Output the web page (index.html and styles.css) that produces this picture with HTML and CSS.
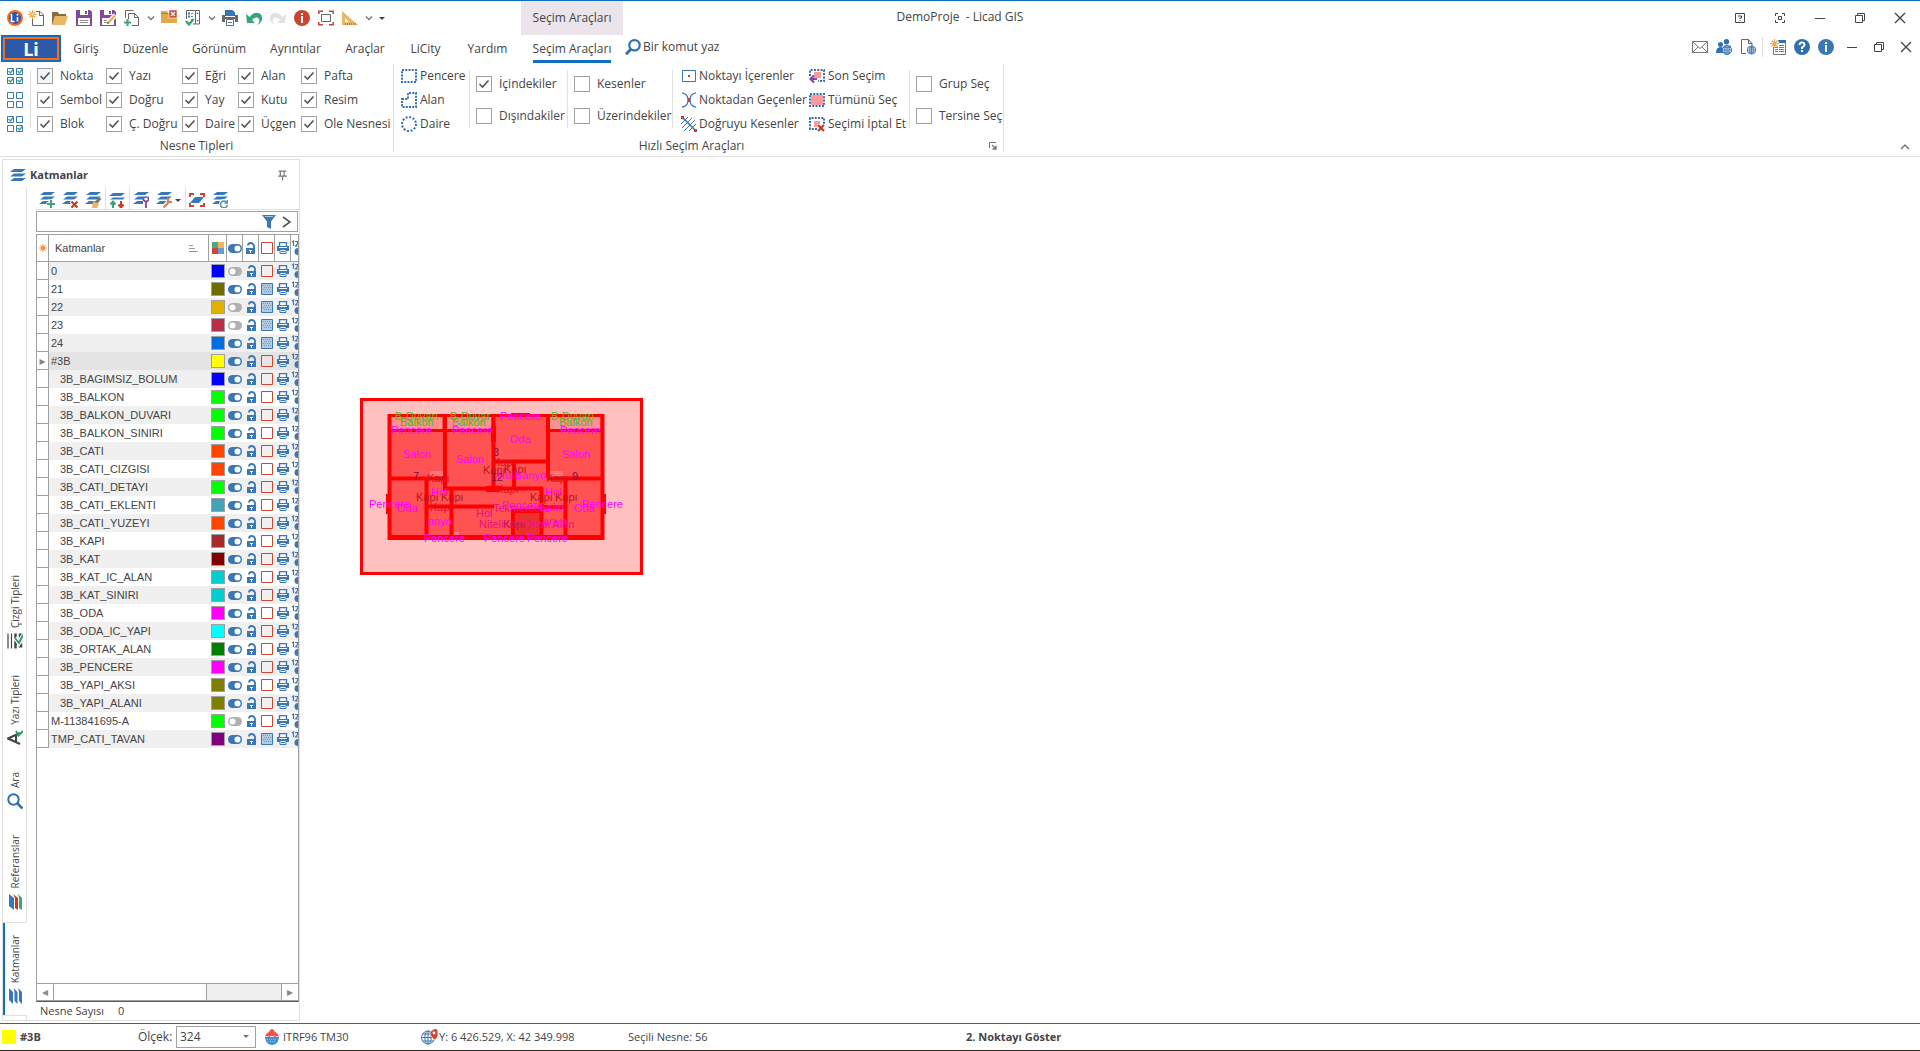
FILE: index.html
```html
<!DOCTYPE html>
<html lang="tr">
<head>
<meta charset="utf-8">
<title>DemoProje - Licad GIS</title>
<link rel="stylesheet" href="styles.css">
</head>
<body>
<svg class="sprite" aria-hidden="true">
  <symbol id="i-logo" viewBox="0 0 16 16"><circle cx="8" cy="8" r="7" fill="#2d5aa8" stroke="#ff6a13" stroke-width="2"/><path d="M4.500 4v7.500h3M10.500 7v4.500" fill="none" stroke="#fff" stroke-width="1.600"/><circle cx="10.500" cy="4.800" r="1" fill="#fff"/></symbol>
  <symbol id="i-new" viewBox="0 0 16 16"><path d="M8 1.500h4l3.500 3.500v10.500h-11V9" fill="#fff" stroke="#666"/><path d="M11.500 1.500V5.500h4" fill="none" stroke="#666"/><path d="M4.500 0v9M0 4.500h9M1.500 1.500l6 6M7.500 1.500l-6 6" stroke="#f0a94a" stroke-width="1.200"/><circle cx="4.500" cy="4.500" r="1" fill="#fff"/></symbol>
  <symbol id="i-folder" viewBox="0 0 16 16"><path d="M0 2h6l1 2h7v2H3L1 14H0z" fill="#8a6a3a"/><path d="M3 6h13l-3 9H0z" fill="#e8b768"/></symbol>
  <symbol id="i-save" viewBox="0 0 16 16"><path d="M0 0h14l2 2v14H0z" fill="#8347a0"/><path d="M4 0h8v5H4zM2 8h12v7H2z" fill="#fff"/><path d="M9 1h2v3H9z" fill="#8347a0"/><path d="M4 10.500h8M4 12.500h8" stroke="#8a8a8a"/></symbol>
  <symbol id="i-saveedit" viewBox="0 0 16 16"><path d="M0 0h14l2 2v14H0z" fill="#8347a0"/><path d="M4 0h8v5H4zM2 8h12v7H2z" fill="#fff"/><path d="M9 1h2v3H9z" fill="#8347a0"/><path d="M4 10.500h4M4 12.500h3" stroke="#8a8a8a"/><path d="M15.500 5L8 13" stroke="#fff" stroke-width="5"/><path d="M15 5.500L8.500 12.500" stroke="#e8b050" stroke-width="2.500"/><path d="M7 14l.6-2.500 2 1.800z" fill="#555"/></symbol>
  <symbol id="i-addpage" viewBox="0 0 16 16"><path d="M1.500 8V.5h8M4.500 9V3.500h6l4 4v8H8" fill="none" stroke="#666"/><path d="M10.500 3.500v4h4" fill="none" stroke="#666"/><path d="M3.500 9v7M0 12.500h7" stroke="#3aa57a" stroke-width="2"/></symbol>
  <symbol id="i-boxx" viewBox="0 0 16 16"><path d="M0 1h6l1 2h9v10H0z" fill="#e0aa4c"/><path d="M0 3.500h8" stroke="#a87f3a"/><path d="M8 0h8v8H8z" fill="#cc4631" stroke="#fff" stroke-width=".6"/><path d="M10 2l4 4M14 2l-4 4" stroke="#fff" stroke-width="1.300"/></symbol>
  <symbol id="i-list" viewBox="0 0 16 16"><path d="M1.500 9V.5h9V14H8M10.500 .5h4V14h-4" fill="none" stroke="#666"/><path d="M3 3.500h2M3 6.500h2" stroke="#3a77b7" stroke-width="2"/><path d="M6 3.500h3M6 6.500h3M6 9.500h3" stroke="#777" stroke-dasharray="2 1"/><path d="M11.500 4l1-1.500 1 1.500zM11.500 10l1 1.500 1-1.500z" fill="#444"/><path d="M1 11l3 3.500L8.500 9" fill="none" stroke="#3aa57a" stroke-width="2.400"/></symbol>
  <symbol id="i-print" viewBox="0 0 16 16"><path d="M3.500 6V.5h7l2 2V6" fill="#3a77b7" stroke="#2f6aa8"/><path d="M0 5h3v2h10V5h3v7h-3V9H3v3H0z" fill="#686868"/><path d="M4.500 9.500h7v6h-7z" fill="#fff" stroke="#686868"/><path d="M6 12.500h4" stroke="#3a77b7"/></symbol>
  <symbol id="i-undo" viewBox="0 0 16 16"><path d="M0 4l1 9h8L6 10q4-4 6.500-1.500T11 15q6-3 5-8T8.500 3Q6 4 3.500 7z" fill="#3aa57a"/></symbol>
  <symbol id="i-redo" viewBox="0 0 16 16"><path d="M16 4l-1 9H7l3-3Q6 6 3.500 8.500T5 15Q-1 12 0 7t7.500-4Q10 4 12.500 7z" fill="#e2e2e2"/></symbol>
  <symbol id="i-infored" viewBox="0 0 16 16"><circle cx="8" cy="8" r="8" fill="#c9452f"/><path d="M7 3h2v2H7zM7 6h2v7H7z" fill="#fff"/></symbol>
  <symbol id="i-frame" viewBox="0 0 16 16"><path d="M.8 4V1.300H5M11 1.300h4.200V4M15.200 12v2.700H11M5 14.700H.8V12" fill="none" stroke="#c9452f" stroke-width="1.500"/><path d="M3.500 4.500h9v7h-9z" fill="none" stroke="#666"/></symbol>
  <symbol id="i-ruler" viewBox="0 0 16 16"><path d="M0 1l16 14H0z" fill="#e8b768"/><path d="M3 8l4 4H3z" fill="#fff"/><path d="M3 14h11" stroke="#555" stroke-dasharray="1 1"/></symbol>
  <symbol id="i-caret" viewBox="0 0 8 8"><path d="M1 2.500l3 3 3-3" fill="none" stroke="#777" stroke-width="1.400"/></symbol>
  <symbol id="i-caretfull" viewBox="0 0 8 8"><path d="M1 3h6L4 6z" fill="#444"/></symbol>
  <symbol id="i-mag" viewBox="0 0 16 16"><circle cx="9.500" cy="6.300" r="5.200" fill="none" stroke="#2f6fb3" stroke-width="2.200"/><path d="M6 10l-5 5.300" stroke="#2f6fb3" stroke-width="3"/></symbol>

  <symbol id="i-help" viewBox="0 0 12 12"><path d="M1.500 1.500h9v9h-9z" fill="none" stroke="#444"/><path d="M4 4h3.500v2H6v1M6 8v1" fill="none" stroke="#444"/></symbol>
  <symbol id="i-full" viewBox="0 0 12 12"><path d="M1.500 4V1.500H4M8 1.500h2.500V4M10.500 8v2.500H8M4 10.500H1.500V8M4.500 4.500h3v3h-3z" fill="none" stroke="#444"/></symbol>
  <symbol id="i-min" viewBox="0 0 12 12"><path d="M1 6.500h10" stroke="#444"/></symbol>
  <symbol id="i-restore" viewBox="0 0 12 12"><path d="M1.500 3.500h7v7h-7zM3.500 3V1.500h7v7H9" fill="none" stroke="#444"/></symbol>
  <symbol id="i-close" viewBox="0 0 12 12"><path d="M1 1l10 10M11 1L1 11" stroke="#444" stroke-width="1.400"/></symbol>
  <symbol id="i-mail" viewBox="0 0 16 16"><path d="M.5 2.500h15v11H.5zM.5 2.500L8 9.500l7.500-7M.5 13.500L6 8M15.500 13.500L10 8" fill="none" stroke="#777"/></symbol>
  <symbol id="i-people" viewBox="0 0 16 16"><circle cx="4.500" cy="5.500" r="2.500" fill="#2f6fb3"/><circle cx="10.500" cy="2.700" r="2.700" fill="#2f6fb3"/><path d="M0 14q0-6 4.500-6T9 14zM7 8q2-3 8-1v3H8z" fill="#2f6fb3"/><use href="#i-globe" x="6" y="6" width="10" height="10"/></symbol>
  <symbol id="i-globe" viewBox="0 0 10 10"><circle cx="5" cy="5" r="4.500" fill="#fff" stroke="#2f6fb3"/><path d="M5 .5v9M.5 5h9M1.500 2.700h7M1.500 7.300h7" stroke="#2f6fb3" stroke-width=".9"/><ellipse cx="5" cy="5" rx="2.200" ry="4.500" fill="none" stroke="#2f6fb3" stroke-width=".9"/></symbol>
  <symbol id="i-pageglobe" viewBox="0 0 16 16"><path d="M6 14.500H1.500V.5h7l3.500 4V7M8.500 .5v4H12" fill="none" stroke="#666"/><use href="#i-globe" x="7" y="6.500" width="9" height="9"/></symbol>
  <symbol id="i-newlist" viewBox="0 0 16 16"><path d="M3.500 8v7.500h12V4M9 3h7" fill="none" stroke="#777"/><path d="M8 1h8v3H9z" fill="#2f6fb3"/><path d="M5 8.500h3M9 6.500h5M9 8.500h5M5 10.500h3M9 10.500h5M5 12.500h3M9 12.500h5" stroke="#777"/><path d="M4.500 0v9M0 4.500h9M1.500 1.500l6 6M7.500 1.500l-6 6" stroke="#f0a94a" stroke-width="1.200"/></symbol>
  <symbol id="i-q" viewBox="0 0 16 16"><circle cx="8" cy="8" r="8" fill="#2f6fb3"/><path d="M5.500 6q0-2.600 2.500-2.600T10.500 6Q10.500 7.300 8 8.300V10M8 11v2" fill="none" stroke="#fff" stroke-width="1.900"/></symbol>
  <symbol id="i-info" viewBox="0 0 16 16"><circle cx="8" cy="8" r="8" fill="#3a77b7"/><path d="M7 3h2v2H7zM7 6h2v7H7z" fill="#fff"/></symbol>

  <symbol id="i-allon" viewBox="0 0 16 16"><path d="M.5 .5h6v6h-6zM9.500 .5h6v6h-6zM.5 9.500h6v6h-6zM9.500 9.500h6v6h-6z" fill="#fff" stroke="#3a77b7"/><path d="M1.500 3l2 2 3-4M10.500 3l2 2 3-4M1.500 12l2 2 3-4M10.500 12l2 2 3-4" fill="none" stroke="#3aa57a" stroke-width="1.400"/></symbol>
  <symbol id="i-alloff" viewBox="0 0 16 16"><path d="M.5 .5h6v6h-6zM9.500 .5h6v6h-6zM.5 9.500h6v6h-6zM9.500 9.500h6v6h-6z" fill="#fff" stroke="#3a77b7"/></symbol>
  <symbol id="i-invert" viewBox="0 0 16 16"><path d="M.5 .5h6v6h-6zM9.500 .5h6v6h-6zM.5 9.500h6v6h-6zM9.500 9.500h6v6h-6z" fill="#fff" stroke="#3a77b7"/><path d="M1.500 3l2 2 3-4M10.500 12l2 2 3-4" fill="none" stroke="#3aa57a" stroke-width="1.400"/></symbol>
  <symbol id="i-window" viewBox="0 0 16 16"><path d="M1 2h14v12H1z" fill="none" stroke="#2f6fb3" stroke-width="2" stroke-dasharray="2 1.250"/></symbol>
  <symbol id="i-area" viewBox="0 0 16 16"><path d="M1 7h6V1h8v14H1z" fill="none" stroke="#2f6fb3" stroke-width="2" stroke-dasharray="2 1.250"/></symbol>
  <symbol id="i-circle" viewBox="0 0 16 16"><circle cx="8" cy="8" r="7" fill="none" stroke="#2f6fb3" stroke-width="2" stroke-dasharray="2 1.660"/></symbol>
  <symbol id="i-ptin" viewBox="0 0 16 16"><path d="M1.500 2.500h13v11h-13z" fill="none" stroke="#3a77b7"/><path d="M7 7h2v2H7z" fill="#d23c28"/></symbol>
  <symbol id="i-ptpass" viewBox="0 0 16 16"><path d="M1 .8q6 1 6 7.200t-6 7.200M15 .8q-6 1-6 7.200t6 7.200" fill="none" stroke="#3a77b7" stroke-width="1.300"/><path d="M7 6h2v4H7z" fill="#d23c28"/></symbol>
  <symbol id="i-cross" viewBox="0 0 16 16"><path d="M1 1l14 14" stroke="#3a77b7" stroke-width="1.600"/><path d="M0 8l7-7M1 12L11 2M3 15L14 4M8 15l7-7" stroke="#3a77b7"/><path d="M0 0h3v3H0zM13 13h3v3h-3z" fill="#d23c28"/></symbol>
  <symbol id="i-last" viewBox="0 0 16 16"><path d="M5 4h7v6H5z" fill="#ff9a9a"/><path d="M1 8V2h14v11H9" fill="none" stroke="#2f6fb3" stroke-width="2" stroke-dasharray="2 1.300"/><path d="M8 11H2M5 7.500L1.500 11 5 14.500" fill="none" stroke="#8347a0" stroke-width="2.200"/></symbol>
  <symbol id="i-all" viewBox="0 0 16 16"><path d="M2 3h12v10H2z" fill="#ff9a9a"/><path d="M1 2h14v12H1z" fill="none" stroke="#2f6fb3" stroke-width="2" stroke-dasharray="2 1.250"/></symbol>
  <symbol id="i-cancel" viewBox="0 0 16 16"><path d="M5 5h6v3H8v3H5z" fill="#ff9a9a"/><path d="M8 13H1V2h14v6" fill="none" stroke="#2f6fb3" stroke-width="2" stroke-dasharray="2 1.250"/><path d="M9 9l6 6M15 9l-6 6" stroke="#c93a24" stroke-width="2.200"/></symbol>
  <symbol id="i-launch" viewBox="0 0 8 8"><path d="M.5 6V.5H7" fill="none" stroke="#777"/><path d="M3 3l4 4M7 3.500V7H3.500" fill="none" stroke="#777" stroke-width="1.300"/></symbol>
  <symbol id="i-up" viewBox="0 0 10 10"><path d="M1 7l4-4 4 4" fill="none" stroke="#777" stroke-width="1.500"/></symbol>

  <symbol id="i-layers" viewBox="0 0 16 16"><path d="M4 2h12l-4 3H0zM4 6.500h12l-4 3H0zM4 11h12l-4 3H0z" fill="#3a77b7"/></symbol>
  <symbol id="i-lay" viewBox="0 0 16 16"><path d="M5 0h11l-4 3H1zM5 4.500h11l-4 3H1zM4 9h10l-4 3H0z" fill="#3a77b7"/></symbol>
  <symbol id="l-add" viewBox="0 0 16 16"><use href="#i-lay" width="16" height="16"/><path d="M11.500 7.500v9M7.500 12h9" stroke="#fff" stroke-width="4"/><path d="M12 8v8M8 12h8" stroke="#3aa57a" stroke-width="2"/></symbol>
  <symbol id="l-del" viewBox="0 0 16 16"><use href="#i-lay" width="16" height="16"/><path d="M9 9l6 6M15 9l-6 6" stroke="#fff" stroke-width="4"/><path d="M9.500 9.500l6 6M15.500 9.500l-6 6" stroke="#c93a24" stroke-width="2.200"/></symbol>
  <symbol id="l-brush" viewBox="0 0 16 16"><use href="#i-lay" width="16" height="16"/><path d="M15 6l-4 5" stroke="#777" stroke-width="3"/><path d="M8 9l6 3-2 4H7z" fill="#e8b768"/></symbol>
  <symbol id="l-move" viewBox="0 0 16 16"><path d="M4 1h12l-4 3H0zM4 5.500h12l-2 2H1z" fill="#3a77b7"/><path d="M4 16v-5M1.500 12.500L4 9.500l2.500 3" fill="none" stroke="#3aa57a" stroke-width="2"/><path d="M12 9v5M9.500 12.500l2.500 3 2.500-3" fill="none" stroke="#c93a24" stroke-width="2"/></symbol>
  <symbol id="l-tool" viewBox="0 0 16 16"><use href="#i-lay" width="16" height="16"/><path d="M13 6v10" stroke="#fff" stroke-width="6"/><path d="M10.500 5v3l2.500 2 2.500-2V5M13 9v7" fill="none" stroke="#8347a0" stroke-width="1.800"/></symbol>
  <symbol id="l-fix" viewBox="0 0 16 16"><use href="#i-lay" width="16" height="16"/><path d="M7 16l6-6" stroke="#fff" stroke-width="5"/><path d="M7.500 15.500l5-5M12 6v4h4" fill="none" stroke="#e07a50" stroke-width="2.200"/></symbol>
  <symbol id="l-frame" viewBox="0 0 16 16"><path d="M1 5V2h4M11 2h4v3M15 11v3h-4M5 14H1v-3" fill="none" stroke="#cc4631" stroke-width="2"/><path d="M6 5h9l-5 6H1z" fill="#3a77b7"/></symbol>
  <symbol id="l-ref" viewBox="0 0 16 16"><use href="#i-lay" width="16" height="16"/><circle cx="12" cy="12" r="5" fill="#fff"/><path d="M15 10.500a3.500 3.500 0 1 0 .5 2.500M15.500 8v3h-3" fill="none" stroke="#4d95b8" stroke-width="1.500"/></symbol>
  <symbol id="i-pin" viewBox="0 0 10 10"><path d="M1.500 1h7M3 1v4M6.500 1v4M1 5.500h8M5 6v3.500" fill="none" stroke="#777" stroke-width="1.100"/></symbol>
  <symbol id="i-filter" viewBox="0 0 16 16"><path d="M1 1h14L10 7.500V15l-4-2V7.500z" fill="#3a77b7"/><path d="M4 2.500h8" stroke="#a8c6e2"/></symbol>
  <symbol id="i-next" viewBox="0 0 10 12"><path d="M1 1l7 5-7 5" fill="none" stroke="#555" stroke-width="1.600"/></symbol>
  <symbol id="i-sun" viewBox="0 0 10 10"><circle cx="5" cy="5" r="2.500" fill="#f79646"/><path d="M5 1v8M1 5h8M2.200 2.200l5.600 5.600M7.800 2.200L2.200 7.800" stroke="#f79646" stroke-width=".9"/></symbol>
  <symbol id="i-sort" viewBox="0 0 9 8"><path d="M0 1.500h4M0 4.500h6M0 7.500h9" stroke="#999"/></symbol>
  <symbol id="i-palette" viewBox="0 0 12 12"><path d="M0 0h6v6H0z" fill="#4fa583"/><path d="M6 0h6v6H6z" fill="#ecb65f"/><path d="M0 6h6v6H0z" fill="#cc4631"/><path d="M6 6h6v6H6z" fill="#6a9bd8"/></symbol>
  <symbol id="i-on" viewBox="0 0 14 9"><rect width="14" height="9" rx="4.500" fill="#3a77b7"/><circle cx="9.500" cy="4.500" r="3" fill="#fff"/></symbol>
  <symbol id="i-off" viewBox="0 0 14 9"><rect width="14" height="9" rx="4.500" fill="#b0b0b0"/><circle cx="4.500" cy="4.500" r="3" fill="#fff"/></symbol>
  <symbol id="i-lock" viewBox="0 0 9 12"><path d="M2 3.500Q2 1 4.500 1T8 3.500V6" fill="none" stroke="#3a77b7" stroke-width="1.800"/><path d="M0 6h9v6H0z" fill="#3a77b7"/><path d="M4 8h1v3H4zM3 8h3v1H3z" fill="#fff"/></symbol>
  <symbol id="i-box" viewBox="0 0 12 12"><path d="M.5 .5h11v11H.5z" fill="none" stroke="#cc4631"/></symbol>
  <symbol id="i-hatch" viewBox="0 0 12 12"><path d="M.5 .5h11v11H.5z" fill="#b4cbe4" stroke="#3a77b7"/><path d="M2 2.500h8M3 4.500h8M2 6.500h8M3 8.500h8" stroke="#6f9aca" stroke-dasharray="1 1"/></symbol>
  <symbol id="i-prt" viewBox="0 0 12 12"><path d="M2.500 4V.5h7V4" fill="#fff" stroke="#3a77b7" stroke-width="1.400"/><path d="M0 4h12v5H0z" fill="#3a77b7"/><path d="M2 5.500h8" stroke="#fff"/><path d="M3 7.500h6v4H3z" fill="#fff" stroke="#3a77b7"/><path d="M4 9.500h4" stroke="#3a77b7"/></symbol>
  <symbol id="i-num" viewBox="0 0 7 16"><path d="M1 2l1.500-1v5M4 1.500h2.500v2L4.500 6H7" fill="none" stroke="#3a77b7" stroke-width="1.200"/><circle cx="7" cy="11.500" r="3.500" fill="#3a77b7"/></symbol>
  <symbol id="s-line" viewBox="0 0 16 16"><path d="M1 .5v15M4.500 .5v15" stroke="#444" stroke-width="1.200"/><path d="M8.500 .5v15" stroke="#444" stroke-width="2.500"/><path d="M13.500 .5v15" stroke="#444" stroke-width="3.500" stroke-dasharray="4 1"/><path d="M8 5l4 5 4-8" fill="none" stroke="#fff" stroke-width="4"/><path d="M8 5l4 5 4-8" fill="none" stroke="#2e9e6b" stroke-width="2"/></symbol>
  <symbol id="s-text" viewBox="0 0 16 16"><path d="M13 3L1 8.500 13 14M9 5v7" fill="none" stroke="#444" stroke-width="2"/><path d="M9 1l2.500 4.500L16 1" fill="none" stroke="#2e9e6b" stroke-width="2"/></symbol>
  <symbol id="s-mag" viewBox="0 0 16 16"><circle cx="6.500" cy="6.500" r="5.200" fill="none" stroke="#2f6fb3" stroke-width="2"/><path d="M10 10l5.500 5.500" stroke="#2f6fb3" stroke-width="2.600"/></symbol>
  <symbol id="s-ref" viewBox="0 0 16 16"><path d="M2 0l5 4v12l-5-4z" fill="#3a77b7"/><path d="M6 0l5 4v12l-3-2V4z" fill="#cc3a24"/><path d="M11 0l4 4v12l-3-2V4z" fill="#3aa57a"/></symbol>
  <symbol id="s-lay" viewBox="0 0 16 16"><path d="M2 0l4 4v12l-4-4zM6.500 0l4 4v12l-3-3V4zM11 0l4 4v12l-3-3V4z" fill="#3a77b7"/></symbol>
  <symbol id="i-crs" viewBox="0 0 14 16"><path d="M0 8h14q-1 8-7 8T0 8z" fill="#3c93cf"/><path d="M0 8q1-4 4-5 1-3 3-3t3 3q3 1 4 5l-2-1-2 1-2-1H6L4 8 2 7z" fill="#f0524f"/><path d="M2 10.500h10M3 12.500h8" stroke="#86c2e8" stroke-dasharray="1 1"/></symbol>
  <symbol id="i-geo" viewBox="0 0 17 16"><circle cx="7" cy="8.500" r="6.500" fill="#fff" stroke="#3a77b7"/><path d="M7 2v13M.5 8.500h13M1.500 5h11M1.500 12h11" stroke="#3a77b7"/><ellipse cx="7" cy="8.500" rx="3.200" ry="6.500" fill="none" stroke="#3a77b7"/><path d="M13 11Q9 6 9 4t4-4 4 4-4 7z" fill="#cc4631" stroke="#fff" stroke-width=".6"/><circle cx="13" cy="4" r="1.400" fill="#fff"/></symbol>
</svg>

<header class="titlebar">
  <div class="title-left">
    <div class="qat">
      <button class="ib qat-logo" aria-label="Licad"><svg><use href="#i-logo"/></svg></button>
      <button class="ib" aria-label="Yeni"><svg><use href="#i-new"/></svg></button>
      <button class="ib" aria-label="Aç"><svg><use href="#i-folder"/></svg></button>
      <button class="ib" aria-label="Kaydet"><svg><use href="#i-save"/></svg></button>
      <button class="ib" aria-label="Farklı Kaydet"><svg><use href="#i-saveedit"/></svg></button>
      <button class="ib" aria-label="Ekle"><svg><use href="#i-addpage"/></svg></button>
      <button class="ib drop" aria-label="Ekle seçenekleri"><svg><use href="#i-caret"/></svg></button>
      <button class="ib" aria-label="Kapat"><svg><use href="#i-boxx"/></svg></button>
      <button class="ib" aria-label="Liste"><svg><use href="#i-list"/></svg></button>
      <button class="ib drop" aria-label="Liste seçenekleri"><svg><use href="#i-caret"/></svg></button>
      <button class="ib" aria-label="Yazdır"><svg><use href="#i-print"/></svg></button>
      <button class="ib" aria-label="Geri al"><svg><use href="#i-undo"/></svg></button>
      <button class="ib" aria-label="Yinele"><svg><use href="#i-redo"/></svg></button>
      <button class="ib" aria-label="Bilgi"><svg><use href="#i-infored"/></svg></button>
      <button class="ib" aria-label="Tümünü göster"><svg><use href="#i-frame"/></svg></button>
      <button class="ib" aria-label="Ölç"><svg><use href="#i-ruler"/></svg></button>
      <button class="ib drop" aria-label="Ölç seçenekleri"><svg><use href="#i-caret"/></svg></button>
      <button class="ib drop" aria-label="Araç çubuğunu özelleştir"><svg><use href="#i-caretfull"/></svg></button>
    </div>
    <div class="context">Seçim Araçları</div>
  </div>
  <h1 class="title">DemoProje&nbsp; - Licad GIS</h1>
  <div class="winbtns">
    <button aria-label="Yardım"><svg><use href="#i-help"/></svg></button>
    <button aria-label="Tam ekran"><svg><use href="#i-full"/></svg></button>
    <button aria-label="Simge durumuna küçült"><svg><use href="#i-min"/></svg></button>
    <button aria-label="Önceki boyut"><svg><use href="#i-restore"/></svg></button>
    <button aria-label="Kapat"><svg><use href="#i-close"/></svg></button>
  </div>
</header>

<nav class="tabs">
  <button class="app">Li</button>
  <div class="tablist">
    <button>Giriş</button><button>Düzenle</button><button>Görünüm</button><button>Ayrıntılar</button><button>Araçlar</button><button>LiCity</button><button>Yardım</button><button class="on"><span>Seçim Araçları</span></button>
  </div>
  <label class="command"><svg><use href="#i-mag"/></svg><input type="text" placeholder="Bir komut yaz" aria-label="Bir komut yaz"></label>
  <div class="tabicons">
    <button class="ib" aria-label="Posta"><svg><use href="#i-mail"/></svg></button>
    <button class="ib" aria-label="Topluluk"><svg><use href="#i-people"/></svg></button>
    <button class="ib" aria-label="Web belgesi"><svg><use href="#i-pageglobe"/></svg></button>
    <i class="bar"></i>
    <button class="ib" aria-label="Yenilikler"><svg><use href="#i-newlist"/></svg></button>
    <button class="ib" aria-label="Yardım"><svg><use href="#i-q"/></svg></button>
    <button class="ib" aria-label="Hakkında"><svg><use href="#i-info"/></svg></button>
  </div>
  <div class="docbtns">
    <button aria-label="Belgeyi küçült"><svg><use href="#i-min"/></svg></button>
    <button aria-label="Belge boyutu"><svg><use href="#i-restore"/></svg></button>
    <button aria-label="Belgeyi kapat"><svg><use href="#i-close"/></svg></button>
  </div>
</nav>

<section class="ribbon">
  <div class="group">
    <div class="group-body">
      <div class="stack picks">
        <button class="ib" aria-label="Tümünü işaretle"><svg><use href="#i-allon"/></svg></button>
        <button class="ib" aria-label="Tümünü kaldır"><svg><use href="#i-alloff"/></svg></button>
        <button class="ib" aria-label="Tersine çevir"><svg><use href="#i-invert"/></svg></button>
      </div>
      <div class="types">
        <label class="hot"><input type="checkbox" checked>Nokta</label>
        <label><input type="checkbox" checked>Sembol</label>
        <label><input type="checkbox" checked>Blok</label>
        <label><input type="checkbox" checked>Yazı</label>
        <label><input type="checkbox" checked>Doğru</label>
        <label><input type="checkbox" checked>Ç. Doğru</label>
        <label><input type="checkbox" checked>Eğri</label>
        <label><input type="checkbox" checked>Yay</label>
        <label><input type="checkbox" checked>Daire</label>
        <label><input type="checkbox" checked>Alan</label>
        <label><input type="checkbox" checked>Kutu</label>
        <label><input type="checkbox" checked>Üçgen</label>
        <label><input type="checkbox" checked>Pafta</label>
        <label><input type="checkbox" checked>Resim</label>
        <label><input type="checkbox" checked>Ole Nesnesi</label>
      </div>
    </div>
    <div class="caption">Nesne Tipleri</div>
  </div>
  <div class="group">
    <div class="group-body">
      <div class="stack shapes">
        <button><svg><use href="#i-window"/></svg>Pencere</button>
        <button><svg><use href="#i-area"/></svg>Alan</button>
        <button><svg><use href="#i-circle"/></svg>Daire</button>
      </div>
      <div class="pair inside">
        <label><input type="checkbox" checked>İçindekiler</label>
        <label><input type="checkbox">Dışındakiler</label>
      </div>
      <div class="pair cutting">
        <label><input type="checkbox">Kesenler</label>
        <label><input type="checkbox">Üzerindekiler</label>
      </div>
      <div class="stack points">
        <button><svg><use href="#i-ptin"/></svg>Noktayı İçerenler</button>
        <button><svg><use href="#i-ptpass"/></svg>Noktadan Geçenler</button>
        <button><svg><use href="#i-cross"/></svg>Doğruyu Kesenler</button>
      </div>
      <div class="stack sels">
        <button><svg><use href="#i-last"/></svg>Son Seçim</button>
        <button><svg><use href="#i-all"/></svg>Tümünü Seç</button>
        <button><svg><use href="#i-cancel"/></svg>Seçimi İptal Et</button>
      </div>
      <div class="pair last">
        <label><input type="checkbox">Grup Seç</label>
        <label><input type="checkbox">Tersine Seç</label>
      </div>
    </div>
    <div class="caption with-launch"><span>Hızlı Seçim Araçları</span><button aria-label="Ayrıntılar"><svg><use href="#i-launch"/></svg></button></div>
  </div>
  <button class="collapse" aria-label="Şeridi daralt"><svg><use href="#i-up"/></svg></button>
</section>

<main class="work">
  <aside class="dock">
    <div class="dock-head">
      <svg><use href="#i-layers"/></svg><h2>Katmanlar</h2>
      <button aria-label="Otomatik gizle"><svg><use href="#i-pin"/></svg></button>
    </div>
    <div class="dock-body">
      <div class="sidetabs">
        <button><span>Çizgi Tipleri</span><svg><use href="#s-line"/></svg></button>
        <button><span>Yazı Tipleri</span><svg><use href="#s-text"/></svg></button>
        <button><span>Ara</span><svg><use href="#s-mag"/></svg></button>
        <button><span>Referanslar</span><svg><use href="#s-ref"/></svg></button>
        <button class="on"><span>Katmanlar</span><svg><use href="#s-lay"/></svg></button>
      </div>
      <div class="layers">
        <div class="ltools">
          <div><button class="ib" aria-label="Katman ekle"><svg><use href="#l-add"/></svg></button><button class="ib" aria-label="Katman sil"><svg><use href="#l-del"/></svg></button><button class="ib" aria-label="Temizle"><svg><use href="#l-brush"/></svg></button></div>
          <div><button class="ib" aria-label="Sırala"><svg><use href="#l-move"/></svg></button></div>
          <div><button class="ib" aria-label="Katman araçları"><svg><use href="#l-tool"/></svg></button><button class="ib" aria-label="Düzelt"><svg><use href="#l-fix"/></svg></button><button class="ib drop" aria-label="Düzelt seçenekleri"><svg><use href="#i-caretfull"/></svg></button></div>
          <div><button class="ib" aria-label="Katmana odaklan"><svg><use href="#l-frame"/></svg></button><button class="ib" aria-label="Yenile"><svg><use href="#l-ref"/></svg></button></div>
        </div>
        <div class="filter"><input type="text" aria-label="Katman ara"><button class="ib" aria-label="Filtrele"><svg><use href="#i-filter"/></svg></button><button class="next" aria-label="Sonraki"><svg><use href="#i-next"/></svg></button></div>
        <div class="gridbox">
          <table class="grid">
            <colgroup><col class="c-ind"><col><col class="c-color"><col class="c-ic"><col class="c-ic"><col class="c-ic"><col class="c-ic"><col class="c-num"></colgroup>
            <thead><tr>
              <th><svg class="s10"><use href="#i-sun"/></svg></th>
              <th class="name"><span>Katmanlar</span><svg class="sort"><use href="#i-sort"/></svg></th>
              <th><svg class="s12"><use href="#i-palette"/></svg></th>
              <th><svg class="tog"><use href="#i-on"/></svg></th>
              <th><svg class="lock"><use href="#i-lock"/></svg></th>
              <th><svg class="s12"><use href="#i-box"/></svg></th>
              <th><svg class="s12"><use href="#i-prt"/></svg></th>
              <th><svg class="num"><use href="#i-num"/></svg></th>
            </tr></thead>
            <tbody id="rows"></tbody>
          </table>
          <div class="hscroll"><button aria-label="Sola kaydır">◂</button><i class="thumb"></i><button class="right" aria-label="Sağa kaydır">▸</button></div>
        </div>
        <div class="count"><span>Nesne Sayısı</span><span>0</span></div>
      </div>
    </div>
  </aside>
  <div class="canvas">
    <svg class="plan" viewBox="0 0 300 190">
      <rect x="11.500" y="9.500" width="280" height="174" fill="#ffc0c0" stroke="#f00" stroke-width="3"/>
      <rect x="39" y="25" width="214" height="124" fill="#ff5252"/>
      <path d="M41 27h51v12H41zM97 27h44v12H97zM200 27h50v12h-50z" fill="#ff9090"/>
      <path d="M80 81h13v6H80zM199 81h14v6h-14zM104 142h5v4h-5z" fill="#ff7474"/>
      <path d="M164 122h26v23h-26z" fill="#ec3030"/>
      <path d="M39.500 24v126M252.500 24v126M95 24v74M143.500 27v71M198 27v61" stroke="#f00" stroke-width="4"/>
      <path d="M38 25.500h216M38 40.500h104M197 40.500h57" stroke="#f00" stroke-width="3"/>
      <path d="M38 147.500h216" stroke="#f00" stroke-width="5"/>
      <path d="M40 88.500h55M197 88.500h56M93 98.500h100M143 71.500h55M76 116.500h68M193 117h22M162 121h30M164 72v26M76.500 89v58M101.500 98v48M215.500 89v58M191.500 98v48M163 120v26" fill="none" stroke="#f00" stroke-width="4"/>
      <path d="M36 104h5v20h-5zM251 104h5v20h-5zM136 96h14v6h-14zM141 36h5v16h-5zM161 23h19v4h-19z" fill="#f00"/>
      <g fill="#48b81a"><text x="45" y="30">B-Duvarı</text><text x="100" y="30">B-Duvar</text><text x="201" y="30">B-Duvarı</text><text x="50" y="36">Balkon</text><text x="102" y="36">Balkon</text><text x="209" y="36">Balkon</text></g>
      <g fill="#b8141e"><text x="133" y="84">Kapı</text><text x="154" y="83">Kapı</text><text x="66" y="111">Kapı</text><text x="91" y="111">Kapı</text><text x="180" y="111">Kapı</text><text x="205" y="111">Kapı</text><text x="153" y="138">Kapı</text></g>
      <g fill="#d81420"><text x="77" y="92">Kapı</text><text x="196" y="92">Kapı</text><text x="80" y="121">Kapı</text><text x="146" y="103">Kapı</text><text x="143" y="76">Kapı</text></g>
      <g fill="#80104a"><text x="143" y="66">3</text><text x="63" y="90">7</text><text x="222" y="90">9</text><text x="141" y="91">12</text></g>
      <g fill="#e8108a"><text x="143" y="122">Tekmercere</text><text x="129" y="138">Niteliksiz</text><text x="173" y="138">Ortak Alan</text><text x="126" y="127">Hol</text></g>
      <g fill="#f0f"><text x="41" y="44">Pencere</text><text x="102" y="44">Pencere</text><text x="210" y="44">Pencere</text><text x="150" y="30">Pencere</text><text x="53" y="68">Salon</text><text x="106" y="73">Salon</text><text x="212" y="68">Salon</text><text x="160" y="53">Oda</text><text x="147" y="89">Hol</text><text x="165" y="89">Banyo</text><text x="81" y="106">Hol</text><text x="195" y="106">Hol</text><text x="47" y="122">Oda</text><text x="224" y="122">Oda</text><text x="19" y="118">Pencere</text><text x="232" y="118">Pencere</text><text x="152" y="119">Pencere</text><text x="78" y="135">anyo</text><text x="193" y="135">anyo</text><text x="190" y="121">Esim</text><text x="74" y="152">Pencere</text><text x="134" y="152">Pencere</text><text x="177" y="152">Pencere</text></g>
    </svg>
  </div>
</main>

<footer class="status">
  <div class="st-layer"><i></i><b>#3B</b></div>
  <div class="st-scale"><label for="scale">Ölçek:</label><select id="scale"><option>324</option></select></div>
  <div class="st-crs"><svg><use href="#i-crs"/></svg>ITRF96 TM30</div>
  <div class="st-xy"><svg><use href="#i-geo"/></svg>Y: 6 426.529, X: 42 349.998</div>
  <div class="st-sel">Seçili Nesne: 56</div>
  <b>2. Noktayı Göster</b>
</footer>
<script src="rows.js"></script>
</body>
</html>
```
FILE: rows.js
```js
// name, colour, visible, hatched fill
const layers = [
  ["0", "#0000ff", 0, 0],
  ["21", "#6e6e00", 1, 1],
  ["22", "#e0b000", 0, 1],
  ["23", "#b83048", 0, 1],
  ["24", "#0070e0", 1, 1],
  ["#3B", "#ffff00", 1, 0],
  ["3B_BAGIMSIZ_BOLUM", "#0000ff", 1, 0],
  ["3B_BALKON", "#00ff00", 1, 0],
  ["3B_BALKON_DUVARI", "#00ff00", 1, 0],
  ["3B_BALKON_SINIRI", "#00ff00", 1, 0],
  ["3B_CATI", "#ff4500", 1, 0],
  ["3B_CATI_CIZGISI", "#ff4500", 1, 0],
  ["3B_CATI_DETAYI", "#00ff00", 1, 0],
  ["3B_CATI_EKLENTI", "#46a0b8", 1, 0],
  ["3B_CATI_YUZEYI", "#ff4500", 1, 0],
  ["3B_KAPI", "#a52a2a", 1, 0],
  ["3B_KAT", "#800000", 1, 0],
  ["3B_KAT_IC_ALAN", "#00ced1", 1, 0],
  ["3B_KAT_SINIRI", "#00ced1", 1, 0],
  ["3B_ODA", "#ff00ff", 1, 0],
  ["3B_ODA_IC_YAPI", "#00ffff", 1, 0],
  ["3B_ORTAK_ALAN", "#008000", 1, 0],
  ["3B_PENCERE", "#ff00ff", 1, 0],
  ["3B_YAPI_AKSI", "#808000", 1, 0],
  ["3B_YAPI_ALANI", "#808000", 1, 0],
  ["M-113841695-A", "#00ff00", 0, 0],
  ["TMP_CATI_TAVAN", "#800080", 1, 1]
];
const icon = (cls, id) => `<svg class="${cls}"><use href="#${id}"/></svg>`;
document.getElementById("rows").innerHTML = layers.map(([name, color, on, hatch]) => {
  const current = name === "#3B";
  return `<tr class="${current ? "current" : ""}">
    <td class="ind">${current ? "▸" : ""}</td>
    <td class="name ${name.startsWith("3B_") ? "child" : ""}">${name}</td>
    <td><i class="swatch" style="background:${color}"></i></td>
    <td>${icon("tog", on ? "i-on" : "i-off")}</td>
    <td>${icon("lock", "i-lock")}</td>
    <td>${icon("s12", hatch ? "i-hatch" : "i-box")}</td>
    <td>${icon("s12", "i-prt")}</td>
    <td>${icon("num", "i-num")}</td>
  </tr>`;
}).join("");
```
FILE: styles.css
```css
* { box-sizing: border-box; }
body {
  margin: 0;
  min-height: 100vh;
  display: flex;
  flex-direction: column;
  background: #fff;
  color: #444;
  font: 12px/16px "Open Sans", "Noto Sans", sans-serif;
  border-top: 1px solid #106ebe;
  border-bottom: 1px solid #2c2620;
}
button, input, select { font: inherit; color: inherit; }
button { background: none; border: 0; padding: 0; white-space: nowrap; }
svg { display: block; flex: none; }
h1, h2 { margin: 0; font-size: inherit; }
.sprite { display: none; }
.ib { width: 16px; height: 16px; flex: none; }
.ib svg { width: 16px; height: 16px; }
.ib.drop { width: 5px; display: flex; justify-content: center; align-items: center; }
.ib.drop svg { width: 8px; height: 8px; }

/* title bar */
.titlebar { display: grid; grid-template-columns: 1fr auto 1fr; height: 32px; }
.title-left { display: flex; }
.qat { flex: 0 0 521px; display: flex; align-items: center; gap: 8px; padding-left: 7px; }
.qat-logo { margin-right: -3px; }
.context { width: 102px; background: #ebe4ea; text-align: center; line-height: 34px; }
.title { font-weight: normal; line-height: 32px; }
.winbtns { display: flex; justify-content: flex-end; align-items: center; }
.winbtns button { width: 40px; height: 30px; display: flex; justify-content: center; align-items: center; }
.winbtns svg, .docbtns svg { width: 12px; height: 12px; }

/* tab row */
.tabs { display: flex; height: 30px; align-items: center; padding-bottom: 2px; }
.app { width: 60px; height: 27px; margin: 3px 0 0 1px; background: #2d5aa8; border: 2px solid #106ebe; box-shadow: inset 0 0 0 2px #ff6a13; color: #fff; font-weight: bold; font-size: 18px; line-height: 20px; }
.tablist { display: grid; grid-template-columns: 50px 69px 78px 75px 64px 57px 67px 102px; align-self: stretch; margin-bottom: -2px; }
.tablist button { padding-top: 2px; }
.tablist .on span { display: inline-block; padding: 6px 0 3px; border-bottom: 3px solid #106ebe; }
.command { display: flex; align-items: center; gap: 2px; margin-left: 2px; flex: 1; }
.command svg { width: 16px; height: 16px; }
.command input { border: 0; padding: 0; width: 120px; outline: 0; background: none; }
.command input::placeholder { color: #444; opacity: 1; }
.tabicons { display: flex; align-items: center; gap: 8px; margin-right: 4px; }
.bar { width: 1px; height: 20px; background: #ddd; margin: 0 -1px 0 -2px; }
.docbtns { display: flex; margin-right: 1px; }
.docbtns button { width: 27px; height: 24px; display: flex; justify-content: center; align-items: center; }

/* ribbon */
.ribbon { display: flex; border-bottom: 1px solid #e0e0e0; padding: 1px 0 4px; }
.group { border-right: 1px solid #e0e0e0; }
.group-body { display: flex; height: 72px; }
.caption { height: 16px; text-align: center; line-height: 20px; }
.with-launch { display: flex; align-items: flex-start; }
.with-launch span { flex: 1; }
.with-launch button { margin: 6px 6px 0 0; }
.with-launch svg { width: 8px; height: 8px; }
.stack { display: grid; grid-template-rows: repeat(3, 24px); align-items: center; }
.stack button:not(.ib) { display: flex; align-items: center; gap: 3px; }
.stack svg { width: 16px; height: 16px; }
.picks { padding-left: 7px; width: 30px; }
.types { display: grid; grid-auto-flow: column; grid-template-rows: repeat(3, 24px); grid-template-columns: 69px 76px 56px 63px 92px; padding-left: 7px; }
.types, .inside, .cutting, .points, .last {
  background: linear-gradient(#e0e0e0, #e0e0e0) 0 6px / 1px 58px no-repeat;
}
.ribbon label { display: flex; align-items: center; gap: 7px; white-space: nowrap; }
.ribbon input {
  appearance: none; flex: none; width: 16px; height: 16px; margin: 0;
  border: 1px solid #a0a0a0; background: #fff;
}
.ribbon .hot input { background-color: #f0f6fb; }
.ribbon input:checked {
  background-image: url("data:image/svg+xml,%3Csvg xmlns='http://www.w3.org/2000/svg' viewBox='0 0 14 14'%3E%3Cpath d='M2.500 7l3 3 6-6.500' fill='none' stroke='%23555' stroke-width='1.600'/%3E%3C/svg%3E");
}
.pair { display: grid; grid-template-rows: 32px 32px; align-content: center; padding-left: 7px; }
.shapes { padding-left: 7px; width: 75px; }
.inside { width: 98px; }
.cutting { width: 105px; }
.points { width: 130px; padding-left: 9px; }
.stack.points button { gap: 2px; }
.sels { width: 107px; padding-left: 7px; }
.last { width: 94px; }
.collapse { margin: auto 10px 0 auto; }
.collapse svg { width: 10px; height: 10px; }

/* workspace */
.work { flex: 1; display: flex; padding: 2px 0 2px 2px; }
.dock { width: 298px; flex: none; display: flex; flex-direction: column; border: 1px solid #e0e0e0; }
.dock-head { display: flex; align-items: center; gap: 4px; height: 28px; padding: 2px 11px 0 7px; font: bold 11px/16px "Noto Sans", "Open Sans", sans-serif; }
.dock-head svg { width: 16px; height: 16px; }
.dock-head button { margin-left: auto; }
.dock-head button svg { width: 11px; height: 11px; }
.dock-body { flex: 1; display: flex; gap: 9px; }
.sidetabs { width: 24px; flex: none; border-right: 1px solid #e0e0e0; display: flex; flex-direction: column; justify-content: flex-end; padding-bottom: 4px; font-size: 10px; }
.sidetabs button { display: flex; flex-direction: column; align-items: center; gap: 5px; padding: 14px 0 12px; }
.sidetabs span { writing-mode: vertical-rl; transform: rotate(180deg); line-height: 16px; }
.sidetabs svg { width: 16px; height: 16px; }
.sidetabs .on { margin-right: -1px; padding: 12px 0 11px; border: solid #e0e0e0; border-width: 1px 0; background: #fff; box-shadow: inset 2px 0 #106ebe; }
.layers { flex: 1; min-width: 0; display: flex; flex-direction: column; }
.ltools { display: flex; height: 22px; border-bottom: 1px solid #e0e0e0; }
.ltools div { display: flex; align-items: center; gap: 7px; padding: 2px 4px 0 3px; }
.ltools div + div { border-left: 1px solid #e0e0e0; }
.ltools .drop { margin: 0 1px 0 -4px; }
.filter { display: flex; align-items: center; gap: 5px; height: 21px; margin: 1px 1px 2px 0; padding-right: 5px; border: 1px solid #a0a0a0; }
.filter input { flex: 1; min-width: 0; border: 0; padding: 0; height: 17px; outline: 0; }
.next svg { width: 10px; height: 12px; }
.gridbox { flex: 1; border: 1px solid #a0a0a0; border-bottom: 1px solid #106ebe; display: flex; flex-direction: column; justify-content: space-between; }
.grid { width: 100%; table-layout: fixed; border-spacing: 0; font: 12px/16px "Liberation Sans", Arial, sans-serif; }
.c-ind { width: 12px; } .c-color { width: 18px; } .c-ic { width: 16px; } .c-num { width: 7px; }
.grid th, .grid td { padding: 0; overflow: hidden; }
.grid th { height: 27px; font-weight: normal; border-right: 1px solid #a0a0a0; border-bottom: 1px solid #a0a0a0; }
.grid th:last-child { border-right: 0; }
.grid svg { margin: 0 auto; }
.grid th.name span { float: left; padding-left: 6px; font-size: 11px; }
.grid th.name .sort { float: right; margin: 4px 10px 0 0; width: 9px; height: 8px; }
.grid td { height: 18px; }
.grid tbody tr:nth-child(odd) td { background: #f0f0f0; }
.grid tbody tr.current td { background: #e4e4e4; }
.grid tbody tr td.ind { background: #fff; border: solid #a0a0a0; border-width: 0 1px 1px 0; text-align: center; font: 12px/12px "DejaVu Sans", sans-serif; color: #888; }
.grid td.name { padding-left: 2px; font-size: 11px; white-space: nowrap; }
.grid td.child { padding-left: 11px; }
.s10 { width: 10px; height: 10px; }
.s12 { width: 12px; height: 12px; }
.tog { width: 14px; height: 9px; }
.lock { width: 9px; height: 12px; }
.num { width: 7px; height: 16px; }
.swatch { display: block; width: 14px; height: 14px; margin: 0 auto; border: 1px solid #a0a0a0; }
.hscroll { display: flex; height: 18px; background: #f0f0f0; border: 1px solid #a0a0a0; border-left: 0; border-right: 0; }
.hscroll button { width: 17px; font: 12px/14px "DejaVu Sans", sans-serif; color: #888; background: #fff; border-right: 1px solid #a0a0a0; }
.hscroll .right { margin-left: auto; border-right: 0; border-left: 1px solid #a0a0a0; }
.thumb { width: 153px; background: #fff; border-right: 1px solid #a0a0a0; }
.count { display: flex; gap: 14px; padding: 1px 4px 0; font-size: 11px; height: 18px; }
.canvas { flex: 1; min-width: 0; }
.plan { width: 300px; height: 190px; margin: 231px 0 0 50px; font: 11px "Liberation Sans", Arial, sans-serif; }

/* status bar */
.status { display: flex; align-items: center; height: 27px; border-top: 1px solid #106ebe; font-size: 11px; padding-left: 2px; }
.status div { display: flex; align-items: center; gap: 4px; }
.status div, .status b { white-space: nowrap; }
.st-layer { width: 136px; }
.st-layer i { width: 14px; height: 14px; background: #ff0; }
.status .st-scale { gap: 0; width: 127px; font-size: 12px; }
.st-scale label { width: 38px; }
.st-scale select {
  appearance: none; width: 80px; height: 22px; padding: 0 3px; border: 1px solid #a0a0a0; border-radius: 0; outline: 0;
  background: url("data:image/svg+xml,%3Csvg xmlns='http://www.w3.org/2000/svg' viewBox='0 0 6 4'%3E%3Cpath d='M0 0h6L3 3z' fill='%23777'/%3E%3C/svg%3E") right 6px center / 6px 4px no-repeat #fff;
}
.st-crs { width: 156px; }
.st-crs svg { width: 14px; height: 16px; }
.status .st-xy { width: 207px; gap: 1px; }
.st-xy svg { width: 17px; height: 16px; }
.st-sel { width: 338px; }
```
